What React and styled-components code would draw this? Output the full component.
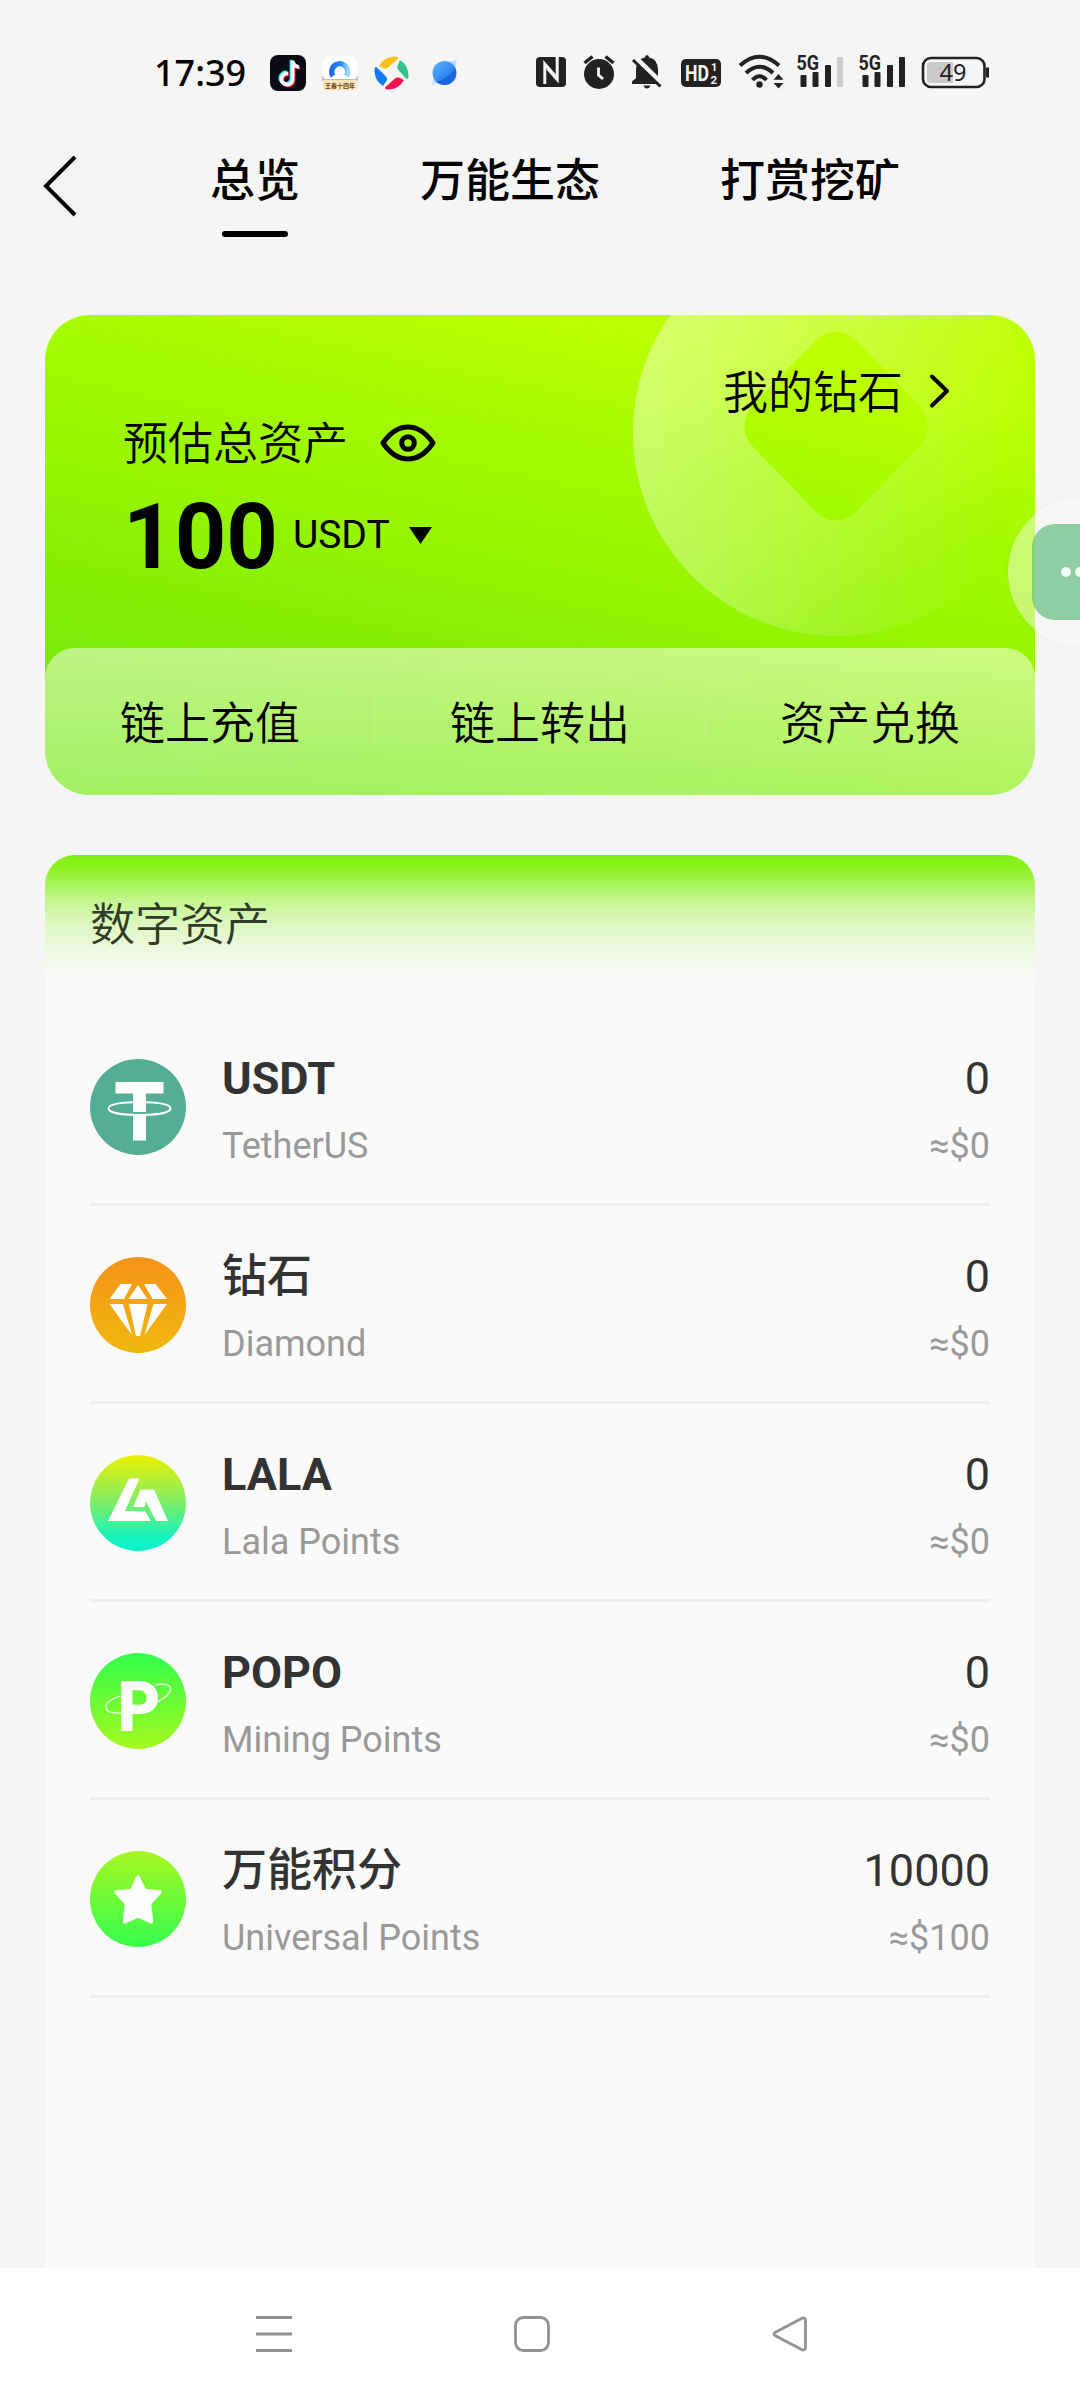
import React from 'react'
import styled, {createGlobalStyle} from 'styled-components'

const GlobalStyle = createGlobalStyle`
    * {
        box-sizing: border-box;
    }

    body {
        margin: 0;
        background: #f5f5f5;
        font-family: Roboto, 'Noto Sans CJK SC', sans-serif;
        color: #000;
    }

    svg {
        display: block;
        flex: none;
        overflow: visible;
    }
`

const Screen = styled.div`
    position: relative;
    display: flex;
    flex-direction: column;
    width: 1080px;
    height: 2400px;
    overflow: hidden;
    background: #f5f5f5;
`

const StatusBar = styled.header`
    display: flex;
    align-items: flex-start;
    height: 130px;
    padding: 49px 91px 0 154px;
`

const Clock = styled.time`
    width: 116px;
    height: 48px;
    font: 500 36px/48px 'Noto Sans', sans-serif;
    white-space: nowrap;
`

const StatusGroup = styled.div`
    display: flex;
    gap: 16px;
    height: 44px;
    margin-top: 2px;
    margin-left: ${props => (props.$end ? 'auto' : '0')};
`

const TopNav = styled.nav`
    display: flex;
    height: 110px;
    padding: 0 0 0 42px;
`

const BackButton = styled.button`
    display: flex;
    align-items: flex-start;
    width: 168px;
    height: 110px;
    padding: 24px 0 0;
    border: 0;
    background: none;
`

const Tabs = styled.div`
    display: flex;
    gap: 120px;
`

const Tab = styled.a`
    display: flex;
    flex-direction: column;
    align-items: center;
    gap: 16px;
    padding-top: 19px;
    font-size: 45px;
    font-weight: 500;
    line-height: 66px;

    &::after {
        content: '';
        width: 66px;
        height: 6px;
        border-radius: 3px;
        background: ${props => (props.$active ? '#000' : 'transparent')};
    }
`

const BalanceCard = styled.section`
    position: relative;
    display: flex;
    flex-direction: column;
    justify-content: space-between;
    height: 480px;
    margin: 75px 45px 0;
    border-radius: 45px;
    overflow: hidden;
    background: linear-gradient(192deg, #bfff00 0%, #bcff00 14%, #a6fb00 32%, #97f500 50%, #7ceb08 78%, #70e610 100%);
`

const CardArt = styled.svg`
    position: absolute;
    top: 0;
    left: 0;
`

const CardTop = styled.div`
    position: relative;
    display: flex;
    justify-content: space-between;
    padding: 0 84px 0 78px;
`

const Estimate = styled.div`
    padding-top: 97px;
`

const EstimateLabel = styled.div`
    display: flex;
    align-items: center;
    gap: 32px;
    height: 66px;
    font-size: 45px;
    font-weight: 350;
    line-height: 66px;

    svg {
        margin-top: -4px;
    }
`

const Total = styled.div`
    display: flex;
    align-items: baseline;
    height: 106px;
    margin-top: 7px;
    line-height: 106px;
`

const Amount = styled.strong`
    font-size: 90px;
    font-weight: 700;
`

const Currency = styled.button`
    display: flex;
    align-items: center;
    gap: 19px;
    margin-left: 15px;
    padding: 0;
    border: 0;
    background: none;
    color: #000;
    font: 400 39px/46px Roboto, sans-serif;
    position: relative;
    top: -20px;
`

const DiamondLink = styled.a`
    display: flex;
    align-items: center;
    gap: 26px;
    height: 66px;
    margin-top: 46px;
    font-size: 45px;
    font-weight: 350;
    line-height: 66px;

    svg {
        margin-top: -7px;
    }
`

const Actions = styled.div`
    position: relative;
    display: flex;
    height: 147px;
    border-radius: 30px 30px 0 0;
    background: linear-gradient(180deg, rgba(255, 255, 255, 0.5), rgba(255, 255, 255, 0.35));
`

const Action = styled.a`
    flex: 1;
    display: flex;
    align-items: center;
    justify-content: center;
    padding-top: 6px;
    font-size: 45px;
    font-weight: 350;
    line-height: 66px;
`

const Divider = styled.i`
    width: 2px;
    height: 60px;
    margin: 42px -1px 0;
    background: rgba(255, 255, 255, 0.07);
`

const AssetsPanel = styled.section`
    flex: 1;
    margin: 60px 45px 0;
    border-radius: 30px 30px 0 0;
    overflow: hidden;
    background: #fafafa;
`

const AssetsTitle = styled.h2`
    height: 153px;
    margin: 0;
    padding: 38px 45px 0;
    background: linear-gradient(
        180deg,
        #81ef10 0,
        #8bf120 12px,
        #c3f68c 44px,
        #def8c2 70px,
        #edf9e0 96px,
        #fafafa 126px
    );
    color: #303c28;
    font-size: 45px;
    font-weight: 350;
    line-height: 66px;
`

const AssetList = styled.ul`
    margin: 0;
    padding: 0 45px;
    list-style: none;
`

const AssetRow = styled.li`
    display: flex;
    align-items: center;
    height: 198px;
    padding-top: 3px;
    border-bottom: 3px solid #eeeeee;
`

const AssetText = styled.div`
    display: flex;
    flex-direction: column;
    gap: 10px;
    margin-left: ${props => (props.$end ? 'auto' : '36px')};
    padding-top: 8px;
    text-align: ${props => (props.$end ? 'right' : 'left')};
`

const AssetMain = styled.span`
    height: 60px;
    color: #333;
    font-size: 45px;
    font-weight: ${props => props.$weight};
    line-height: 60px;
`

const AssetSub = styled.span`
    height: 54px;
    color: #999;
    font-size: 36px;
    line-height: 54px;
`

const SystemNav = styled.footer`
    display: flex;
    align-items: flex-start;
    gap: 222px;
    height: 132px;
    padding: 48px 0 0 256px;
    background: #fff;
`

const FloatingBall = styled.div`
    position: absolute;
    top: 497px;
    left: 1008px;
    display: flex;
    align-items: center;
    width: 150px;
    height: 150px;
    padding-left: 24px;
    border-radius: 50%;
    background: rgba(250, 250, 250, 0.45);
    box-shadow: 0 0 6px rgba(0, 0, 0, 0.04);
`

const BallFace = styled.div`
    display: flex;
    align-items: center;
    gap: 4px;
    width: 96px;
    height: 96px;
    padding-left: 29px;
    border-radius: 23px;
    background: rgba(88, 184, 116, 0.65);
`

const BallDot = styled.i`
    width: 10px;
    height: 10px;
    border-radius: 50%;
    background: #f1fff5;
`

const TikTokIcon = () =>
    <svg width="36" height="44" viewBox="270 51 36 44">
        <rect x="270" y="55" width="36" height="36" rx="8" fill="#0b0b14" />
        <g fill="none" strokeWidth="3.6">
            <path d="M288 73.5a5.6 5.6 0 1 0 4.6 6V61c.8 4 3 5.8 6.4 6" stroke="#25f4ee" transform="translate(-1.2 -1)" />
            <path d="M288 73.5a5.6 5.6 0 1 0 4.6 6V61c.8 4 3 5.8 6.4 6" stroke="#fe2c55" transform="translate(1 1)" />
            <path d="M288 73.5a5.6 5.6 0 1 0 4.6 6V61c.8 4 3 5.8 6.4 6" stroke="#fff" />
        </g>
    </svg>

const BrowserIcon = () =>
    <svg width="36" height="44" viewBox="322 51 36 44">
        <defs>
            <linearGradient id="browserArc" x1="0" x2="1">
                <stop offset="0" stopColor="#1a6df0" />
                <stop offset="0.6" stopColor="#1f8ff5" />
                <stop offset="1" stopColor="#9bd8fb" />
            </linearGradient>
        </defs>
        <rect x="323" y="56" width="34" height="34" rx="6" fill="#fff" />
        <path d="M333 76a8 8 0 1 1 13.5 0" fill="none" stroke="url(#browserArc)" strokeWidth="5.5" />
        <path d="M322 76l4 4v-1h28v1l4-4v5h-36z" fill="#b9bcc8" />
        <path d="M323 80h34v7a3 3 0 0 1-3 3h-28a3 3 0 0 1-3-3z" fill="#fbe6bd" />
        <text x="340" y="87.5" textAnchor="middle" fontSize="6" fontWeight="700" fill="#70430c" fontFamily="Noto Sans CJK SC, sans-serif">
            王春十四年
        </text>
    </svg>

const PinwheelIcon = () =>
    <svg width="36" height="44" viewBox="374 51 36 44">
        <path d="M379 66q5-9 15-9.5q6 0 3 3l-9 8q-2 1.500-4 1z" fill="#fdc00f" />
        <path d="M400 60q8 5 8.500 15q0 6-3 3l-7-8q-2-2-1-4z" fill="#2fc58c" />
        <path d="M404 80q-5 9-15 9.500q-6 0-3-3l9-8q2-1.500 4-1z" fill="#f4124f" />
        <path d="M383 86q-8-5-8.500-15q0-6 3-3l8 8q2 2 1.500 4z" fill="#117bf5" />
    </svg>

const PlanetIcon = () =>
    <svg width="36" height="44" viewBox="426 51 36 44">
        <defs>
            <linearGradient id="planetFill" x1="0" y1="0" x2="1" y2="1">
                <stop offset="0" stopColor="#63b5ff" />
                <stop offset="0.6" stopColor="#2c85f2" />
                <stop offset="1" stopColor="#1562df" />
            </linearGradient>
        </defs>
        <path d="M446 62l11-2-3 11-18 12-4 2 2-9z" fill="#b5dcfb" />
        <circle cx="444.5" cy="73" r="12" fill="url(#planetFill)" />
        <path d="M436 82q12-3 19-14q3 8-3 14t-16 0z" fill="#1865dc" />
    </svg>

const NfcIcon = () =>
    <svg width="32" height="44" viewBox="535 51 32 44">
        <rect x="536" y="57" width="30" height="30" rx="4" fill="#222" />
        <path d="M544.8 84V64l10 11.5M557.2 57v22.5L547.5 68.5" fill="none" stroke="#f5f5f5" strokeWidth="3" />
    </svg>

const AlarmIcon = () =>
    <svg width="32" height="44" viewBox="583 51 32 44">
        <circle cx="599" cy="74" r="15" fill="#222" />
        <path d="M584.5 63l8-6.5M613.5 63l-8-6.5" stroke="#222" strokeWidth="3.5" />
        <path d="M598.5 67.5v7.5l4.5 4" fill="none" stroke="#f5f5f5" strokeWidth="2.8" />
    </svg>

const MutedBellIcon = () =>
    <svg width="34" height="44" viewBox="631 51 34 44">
        <path d="M636 78v-8q0-11 9-12.5q0-2.5 2-2.5t2 2.5q9 1.5 9 12.5v8l4 3.500v2.500h-30v-2.500z" fill="#222" />
        <path d="M643.5 85.5h7q-1 3-3.5 3t-3.5-3z" fill="#222" />
        <path d="M634.5 57.5l27.500 27" stroke="#f5f5f5" strokeWidth="6.5" />
        <path d="M633 60l27.500 26.500" stroke="#222" strokeWidth="3" />
    </svg>

const HdIcon = () =>
    <svg width="41" height="44" viewBox="681 51 41 44">
        <rect x="681" y="59" width="40" height="28" rx="5" fill="#222" />
        <g fill="#f5f5f5" fontFamily="Roboto, sans-serif" fontWeight="700">
            <text x="685" y="81" fontSize="22" textLength="24" lengthAdjust="spacingAndGlyphs">HD</text>
            <text x="711" y="71" fontSize="11">1</text>
            <text x="710.5" y="84" fontSize="11.5">2</text>
        </g>
    </svg>

const WifiIcon = () =>
    <svg width="44" height="44" viewBox="738 51 44 44">
        <g fill="none" stroke="#222" strokeWidth="4">
            <path d="M740 65.5Q759.5 48 779 65.5" />
            <path d="M746 73Q759.5 60.5 773 73" />
            <path d="M752.5 80Q759.5 72.5 766.5 80" />
        </g>
        <circle cx="759.5" cy="84.500" r="3.2" fill="#222" />
        <path d="M778.5 74l5 5.8h-10zM778.5 88.5l5-5.5h-10z" fill="#222" />
    </svg>

const SignalIcon = ({last}) =>
    <svg width="46" height="44" viewBox="798 51 46 44">
        <text x="796.5" y="70" fontSize="20.5" fontWeight="700" fill="#222" fontFamily="Roboto, sans-serif" textLength="22.5" lengthAdjust="spacingAndGlyphs">
            5G
        </text>
        <g fill="#222">
            <rect x="800.5" y="75" width="6" height="12" rx="1" />
            <rect x="812.5" y="72" width="6" height="15" rx="1" />
            <rect x="825" y="65" width="6" height="22" rx="1" />
            <rect x="837" y="57" width="6" height="30" rx="1" fill={last} />
        </g>
    </svg>

const BatteryIcon = () =>
    <svg width="67" height="44" viewBox="922 51 67 44">
        <rect x="923" y="58" width="61.5" height="29" rx="8" fill="none" stroke="#222" strokeWidth="2.6" />
        <path d="M930 62h23v21h-23q-3 0-3-3v-15q0-3 3-3z" fill="#cacaca" />
        <path d="M987.5 67.5v10" stroke="#222" strokeWidth="3" />
        <text x="953" y="81" textAnchor="middle" fontSize="23.5" fill="#222" fontFamily="Noto Sans, sans-serif">49</text>
    </svg>

const TetherIcon = () =>
    <svg width="96" height="96" viewBox="0 0 96 96">
        <circle cx="48" cy="48" r="48" fill="#53ae94" />
        <path d="M25.5 23h48v11.500H56V53H43V34.500H25.500z" fill="#fff" />
        <path d="M43 57h13v24.500H43z" fill="#fff" />
        <path d="M43 43.3C28 43.8 18.5 46 18.5 49.5c0 4 13 6.5 31 6.5s31-2.500 31-6.500c0-3.500-9.500-5.700-24.500-6.200" fill="none" stroke="#fff" strokeWidth="2" />
    </svg>

const DiamondIcon = () =>
    <svg width="96" height="96" viewBox="0 0 96 96">
        <defs>
            <linearGradient id="diamondBg" x2="0" y2="1">
                <stop offset="0" stopColor="#f7931a" />
                <stop offset="1" stopColor="#efb80c" />
            </linearGradient>
        </defs>
        <circle cx="48" cy="48" r="48" fill="url(#diamondBg)" />
        <g fill="#fff">
            <path d="M30.5 27H42L34 42H19.500zM54 27h11.500L77 42H62.500zM48 28l9.500 14h-19z" />
            <path d="M19.5 47H33l9 31zM77 47H63.500l-9 31zM39 47h18.500L50 79h-4z" />
        </g>
    </svg>

const LalaIcon = () =>
    <svg width="96" height="96" viewBox="0 0 96 96">
        <defs>
            <linearGradient id="lalaBg" x2="0" y2="1">
                <stop offset="0" stopColor="#eef000" />
                <stop offset="0.5" stopColor="#7bee68" />
                <stop offset="0.85" stopColor="#18f3bd" />
                <stop offset="1" stopColor="#0cf3cf" />
            </linearGradient>
        </defs>
        <circle cx="48" cy="48" r="48" fill="url(#lalaBg)" />
        <g fill="#fff">
            <path d="M39 23.5h10.500L35 56h20l6 10H18z" />
            <path d="M50.5 34.5H64L78 66H66L56 46.500l-1.500 5.500H43z" />
        </g>
    </svg>

const PopoIcon = () =>
    <svg width="96" height="96" viewBox="0 0 96 96">
        <defs>
            <linearGradient id="popoBg" x2="0" y2="1">
                <stop offset="0" stopColor="#33ff4c" />
                <stop offset="1" stopColor="#a4f81e" />
            </linearGradient>
        </defs>
        <circle cx="48" cy="48" r="48" fill="url(#popoBg)" />
        <path
            d="M32 60c-8 .5-15-1-16-5s4-9 15-12M65 32c9-2 15-.5 15.500 3.500s-4 8.500-14 14"
            fill="none"
            stroke="#d9ffc4"
            strokeWidth="1.6"
        />
        <text x="27.5" y="77.5" fontSize="70" fontWeight="900" fill="#fff" fontFamily="Roboto, sans-serif" textLength="43" lengthAdjust="spacingAndGlyphs">
            P
        </text>
    </svg>

const StarIcon = () =>
    <svg width="96" height="96" viewBox="0 0 96 96">
        <defs>
            <linearGradient id="starBg" x2="0" y2="1">
                <stop offset="0" stopColor="#a6f621" />
                <stop offset="1" stopColor="#35ff4e" />
            </linearGradient>
        </defs>
        <circle cx="48" cy="48" r="48" fill="url(#starBg)" />
        <path
            d="M48 26l6.500 13.500L70 41 59.500 52.500 61.500 71 48 65l-13.500 6 2-18.500L26 41l15.500-1.500z"
            fill="#fff"
            stroke="#fff"
            strokeWidth="3.5"
            strokeLinejoin="round"
        />
    </svg>

const assets = [
    {name: 'USDT', sub: 'TetherUS', amount: '0', value: '≈$0', weight: 700, icon: TetherIcon},
    {name: '钻石', sub: 'Diamond', amount: '0', value: '≈$0', weight: 500, icon: DiamondIcon},
    {name: 'LALA', sub: 'Lala Points', amount: '0', value: '≈$0', weight: 700, icon: LalaIcon},
    {name: 'POPO', sub: 'Mining Points', amount: '0', value: '≈$0', weight: 700, icon: PopoIcon},
    {name: '万能积分', sub: 'Universal Points', amount: '10000', value: '≈$100', weight: 500, icon: StarIcon}
]

const Asset = ({name, sub, amount, value, weight, icon: Icon}) =>
    <AssetRow>
        <Icon />
        <AssetText>
            <AssetMain $weight={weight}>{name}</AssetMain>
            <AssetSub>{sub}</AssetSub>
        </AssetText>
        <AssetText $end>
            <AssetMain $weight={400}>{amount}</AssetMain>
            <AssetSub>{value}</AssetSub>
        </AssetText>
    </AssetRow>

const App = () =>
    <Screen>
        <GlobalStyle />
        <StatusBar>
            <Clock>17:39</Clock>
            <StatusGroup>
                <TikTokIcon />
                <BrowserIcon />
                <PinwheelIcon />
                <PlanetIcon />
            </StatusGroup>
            <StatusGroup $end>
                <NfcIcon />
                <AlarmIcon />
                <MutedBellIcon />
                <HdIcon />
                <WifiIcon />
                <SignalIcon last="#ccc" />
                <SignalIcon last="#222" />
                <BatteryIcon />
            </StatusGroup>
        </StatusBar>
        <TopNav>
            <BackButton aria-label="返回">
                <svg width="36" height="64" viewBox="0 0 36 64">
                    <path d="M33 3L4 32l29 29" fill="none" stroke="#000" strokeWidth="4" />
                </svg>
            </BackButton>
            <Tabs>
                <Tab $active>总览</Tab>
                <Tab>万能生态</Tab>
                <Tab>打赏挖矿</Tab>
            </Tabs>
        </TopNav>
        <BalanceCard>
            <CardArt width="990" height="480" viewBox="45 315 990 480">
                <defs>
                    <linearGradient id="coin" x1="0" y1="0.3" x2="1" y2="0.6">
                        <stop offset="0" stopColor="#fff" stopOpacity="0.43" />
                        <stop offset="0.5" stopColor="#fff" stopOpacity="0.22" />
                        <stop offset="0.95" stopColor="#fff" stopOpacity="0" />
                    </linearGradient>
                    <mask id="coinHole">
                        <rect x="600" y="200" width="480" height="480" fill="#fff" />
                        <g transform="translate(836 426) scale(1 1.03) rotate(45)">
                            <rect x="-73" y="-73" width="146" height="146" rx="28" fill="#000" />
                        </g>
                    </mask>
                </defs>
                <circle cx="836.5" cy="432.5" r="203.5" fill="url(#coin)" mask="url(#coinHole)" />
            </CardArt>
            <CardTop>
                <Estimate>
                    <EstimateLabel>
                        预估总资产
                        <svg width="56" height="38" viewBox="0 0 56 38">
                            <path d="M3 19Q14 3 28 3t25 16Q42 35 28 35T3 19z" fill="none" stroke="#000" strokeWidth="5" strokeLinejoin="round" />
                            <circle cx="28" cy="19" r="6.3" fill="none" stroke="#000" strokeWidth="5" />
                        </svg>
                    </EstimateLabel>
                    <Total>
                        <Amount>100</Amount>
                        <Currency>
                            USDT
                            <svg width="23" height="17" viewBox="0 0 23 17">
                                <path d="M0 0h23L11.500 17z" />
                            </svg>
                        </Currency>
                    </Total>
                </Estimate>
                <DiamondLink>
                    我的钻石
                    <svg width="22" height="34" viewBox="0 0 22 34">
                        <path d="M3 2.5L18 17 3 31.5" fill="none" stroke="#000" strokeWidth="4" strokeLinecap="round" strokeLinejoin="round" />
                    </svg>
                </DiamondLink>
            </CardTop>
            <Actions>
                <Action>链上充值</Action>
                <Divider />
                <Action>链上转出</Action>
                <Divider />
                <Action>资产兑换</Action>
            </Actions>
        </BalanceCard>
        <AssetsPanel>
            <AssetsTitle>数字资产</AssetsTitle>
            <AssetList>
                {assets.map(asset => <Asset key={asset.name} {...asset} />)}
            </AssetList>
        </AssetsPanel>
        <SystemNav>
            <svg width="36" height="36" viewBox="0 0 36 36">
                <path d="M0 1.500h36M0 18h36M0 34.500h36" stroke="#929292" strokeWidth="3" />
            </svg>
            <svg width="36" height="36" viewBox="0 0 36 36">
                <rect x="1.5" y="1.5" width="33" height="33" rx="8" fill="none" stroke="#929292" strokeWidth="2.8" />
            </svg>
            <svg width="36" height="36" viewBox="0 0 36 36">
                <path d="M30 2.2L3 16.5q-2 1.5 0 3L30 33.8q3 1 3.500-2V4.200q-.5-3-3.500-2z" fill="none" stroke="#929292" strokeWidth="2.8" />
            </svg>
        </SystemNav>
        <FloatingBall>
            <BallFace>
                <BallDot />
                <BallDot />
                <BallDot />
            </BallFace>
        </FloatingBall>
    </Screen>

export default App
